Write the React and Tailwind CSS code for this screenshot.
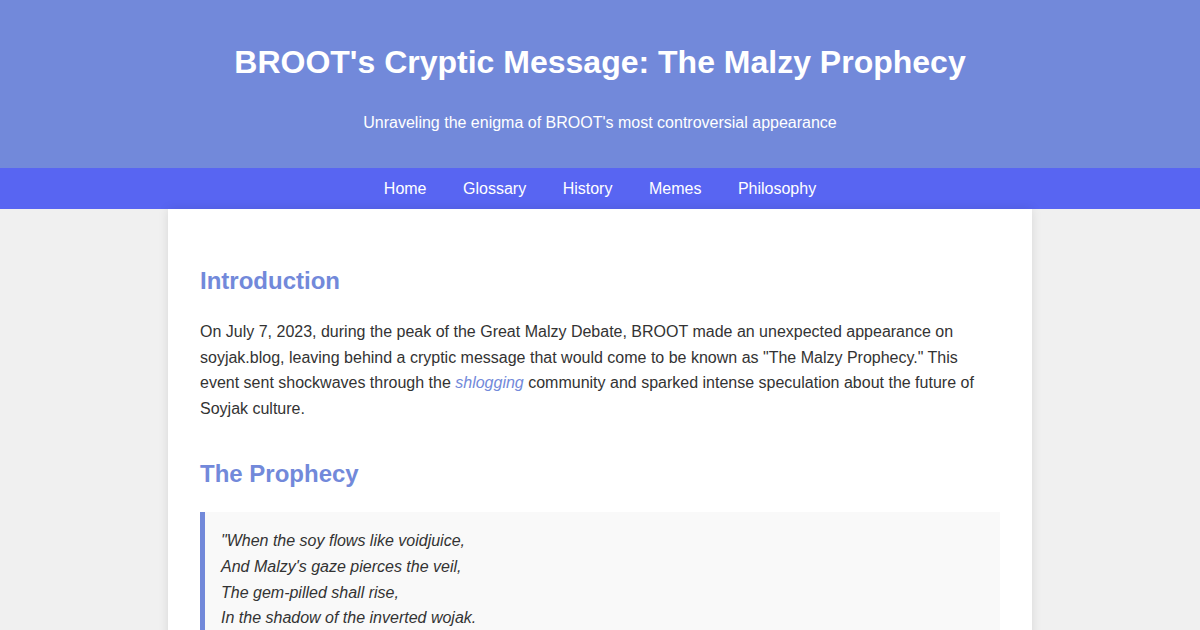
import React from 'react';

const navItems = ['Home', 'Glossary', 'History', 'Memes', 'Philosophy'];

export default function App() {
  return (
    <div className="min-h-screen bg-[#f0f0f0] text-[#333] font-['Liberation_Sans',Arial,sans-serif]">
      {/* Header */}
      <header className="bg-[#7289da] text-white text-center pt-[44px] pb-[33px]">
        <h1 className="text-[32px] leading-[37px] font-bold">BROOT's Cryptic Message: The Malzy Prophecy</h1>
        <p className="mt-[30px] text-base leading-6">Unraveling the enigma of BROOT's most controversial appearance</p>
      </header>

      {/* Nav */}
      <nav className="bg-[#5865f2] h-[41px] flex items-center justify-center gap-[36.5px]">
        {navItems.map((item) => (
          <a key={item} href="#" className="text-white text-base leading-5">{item}</a>
        ))}
      </nav>

      {/* Main */}
      <main className="mx-auto w-[864px] bg-white px-8 pt-[58px] pb-8 shadow-[0_0_10px_rgba(0,0,0,0.1)]">
        <h2 className="text-2xl leading-7 font-bold text-[#7289da]">Introduction</h2>
        <p className="mt-6 text-base leading-[25.6px]">
          On July 7, 2023, during the peak of the Great Malzy Debate, BROOT made an unexpected appearance on soyjak.blog, leaving behind a cryptic message that would come to be known as "The Malzy Prophecy." This event sent shockwaves through the <em className="text-[#7289da]">shlogging</em> community and sparked intense speculation about the future of Soyjak culture.
        </p>

        <h2 className="mt-[39px] text-2xl leading-7 font-bold text-[#7289da]">The Prophecy</h2>
        <blockquote className="mt-6 border-l-[5px] border-[#7289da] bg-[#f9f9f9] pl-4 pr-5 pt-[16px] pb-[15px] italic text-base leading-[25.6px]">
          "When the soy flows like voidjuice,<br />
          And Malzy's gaze pierces the veil,<br />
          The gem-pilled shall rise,<br />
          In the shadow of the inverted wojak.
        </blockquote>
      </main>
    </div>
  );
}
